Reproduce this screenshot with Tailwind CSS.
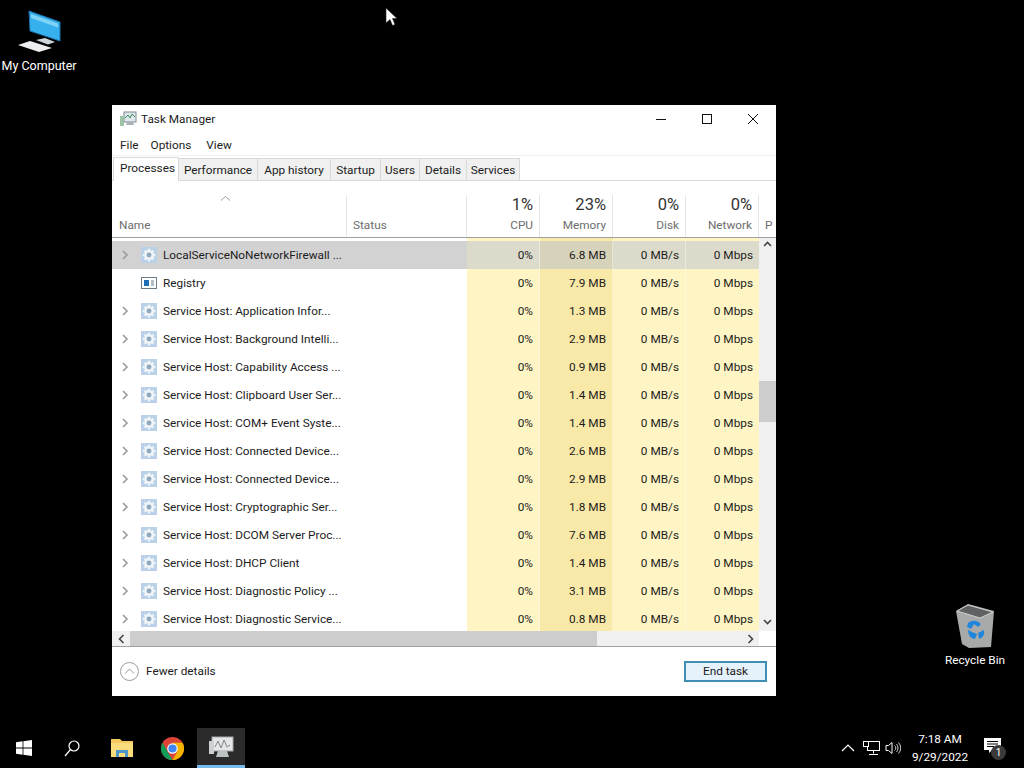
<!DOCTYPE html>
<html lang="en">
<head>
<meta charset="UTF-8">
<title>Task Manager</title>
<script src="https://cdn.jsdelivr.net/npm/@tailwindcss/browser@4"></script>
</head>
<body class="relative w-[1024px] h-[768px] overflow-hidden bg-black font-['Roboto',sans-serif] text-[11.8px] text-[#1c1c1c]">

<svg class="hidden">
  <symbol id="gear" viewBox="0 0 18 18">
    <rect width="18" height="18" fill="#b9d2e8"/>
    <path d="M7.6 0h2.800l.5 2.400 1.500.6 2-1.300 2 2-1.300 2 .6 1.500 2.400.5v2.800l-2.400.5-.6 1.500 1.300 2-2 2-2-1.300-1.500.6-.5 2.400H7.600l-.5-2.400-1.500-.6-2 1.300-2-2 1.300-2-.6-1.500L0 10.400V7.600l2.400-.5.6-1.500-1.300-2 2-2 2 1.300 1.500-.6z" fill="#f2f5f8" transform="translate(2 2) scale(.78)"/>
    <circle cx="9" cy="9" r="2.800" fill="#8fa9bf"/>
  </symbol>
  <symbol id="chev" viewBox="0 0 8 12"><path d="M2 2l4 4-4 4" fill="none" stroke="#9a9a9a" stroke-width="1.600"/></symbol>
</svg>

<!-- desktop icons -->
<div class="absolute left-0 top-0 w-[78px] flex flex-col items-center text-white text-[12.5px]">
  <svg width="78" height="57" viewBox="0 0 78 57">
    <path d="M29 11l31 11v19l-30-10z" fill="#37b1ee" stroke="#1c6fa8"/>
    <path d="M31 14l27 9.500v4L31 18z" fill="#7fd3f7"/>
    <path d="M36 40l9-2 10 4-7 2.500z" fill="#cfd6da"/>
    <path d="M18 45l12-4 22 7-13 4z" fill="#eceeef"/>
  </svg>
  <span class="whitespace-nowrap leading-[16px] mt-px">My Computer</span>
</div>

<div class="absolute left-[936px] top-[603px] w-[78px] flex flex-col items-center text-white">
  <svg width="40" height="46" viewBox="0 0 40 46">
    <path d="M1 8L13 1l26 7-3 36-22 1-7-4z" fill="#a8aaaa"/>
    <path d="M2 8l11-6 25 7-13 6z" fill="#5f6162" stroke="#d0d0d0"/>
    <path d="M13 20a9 9 0 0 1 13 1l-3 3-4-3-3 5-4-2zM13 27l4 2 5 2-2 5c-4 0-7-4-7-9zM24 36l-1-6 6-3c1 4-1 8-5 9z" fill="#1f86dc"/>
  </svg>
  <span class="mt-[3px] leading-[16px] whitespace-nowrap">Recycle Bin</span>
</div>

<!-- cursor -->
<svg class="absolute left-[385px] top-[7px]" width="13" height="20" viewBox="0 0 13 20">
  <path d="M1 1v15l4-3.500 2.500 6 2.500-1-2.500-6H12z" fill="#fff" stroke="#222" stroke-width=".6"/>
</svg>

<!-- task manager window -->
<div class="absolute left-[112px] top-[105px] w-[664px] h-[591px] bg-white flex flex-col">
  <div class="h-[28px] flex items-center shrink-0">
    <svg class="ml-[8px]" width="17" height="16" viewBox="0 0 17 16">
      <rect x="4" y="1" width="12" height="10" fill="#dfe7ec" stroke="#7e8a92"/>
      <path d="M5 7l3-3 2 3 2-4 3 3" fill="none" stroke="#3f8f5d"/>
      <rect x="0" y="5" width="4" height="10" fill="#9cc3a6"/>
      <path d="M7 11h6l1 3H6z" fill="#a9b2b8"/>
    </svg>
    <span class="ml-[4px] mt-[2px]">Task Manager</span>
    <div class="ml-auto flex items-center">
      <svg class="w-[46px] h-[28px]" viewBox="0 0 46 28"><path d="M18 14.500h10" stroke="#111" fill="none"/></svg>
      <svg class="w-[46px] h-[28px]" viewBox="0 0 46 28"><rect x="18.500" y="9.500" width="9" height="9" stroke="#111" fill="none"/></svg>
      <svg class="w-[46px] h-[28px]" viewBox="0 0 46 28"><path d="M18 9l10 10M28 9L18 19" stroke="#111" fill="none"/></svg>
    </div>
  </div>

  <div class="h-[23px] flex items-center pl-[8px] pt-[3px] shrink-0 border-b border-[#f0f0f0]">
    <span>File</span><span class="ml-[12px]">Options</span><span class="ml-[15px]">View</span>
  </div>

  <div class="h-[25px] flex items-end pl-[1px] shrink-0 border-b border-[#d9d9d9] relative">
    <div class="w-[66px] h-[24px] -mb-px bg-white border border-b-0 border-[#d9d9d9] pl-[6px] leading-[20px]">Processes</div>
    <div class="w-[79px] h-[22px] bg-[#f0f0f0] border-r border-t border-[#d9d9d9] text-center leading-[22px]">Performance</div>
    <div class="w-[73px] h-[22px] bg-[#f0f0f0] border-r border-t border-[#d9d9d9] text-center leading-[22px]">App history</div>
    <div class="w-[50px] h-[22px] bg-[#f0f0f0] border-r border-t border-[#d9d9d9] text-center leading-[22px]">Startup</div>
    <div class="w-[39px] h-[22px] bg-[#f0f0f0] border-r border-t border-[#d9d9d9] text-center leading-[22px]">Users</div>
    <div class="w-[47px] h-[22px] bg-[#f0f0f0] border-r border-t border-[#d9d9d9] text-center leading-[22px]">Details</div>
    <div class="w-[53px] h-[22px] bg-[#f0f0f0] border-r border-t border-[#d9d9d9] text-center leading-[22px]">Services</div>
  </div>

  <!-- column headers -->
  <div class="h-[57px] flex shrink-0 border-b border-[#a0a0a0] text-[#6d6d6d] pt-[14px] overflow-hidden">
    <div class="w-[235px] border-r border-[#e5e5e5] pl-[7px] flex flex-col relative">
      <svg class="absolute left-[108px] top-0" width="11" height="7" viewBox="0 0 11 7"><path d="M1 5.500l4.500-4 4.500 4" fill="none" stroke="#a0a0a0"/></svg>
      <span class="mt-auto mb-[4px] leading-[16px]">Name</span>
    </div>
    <div class="w-[120px] border-r border-[#e5e5e5] pl-[6px] flex flex-col">
      <span class="mt-auto mb-[4px] leading-[16px]">Status</span>
    </div>
    <div class="w-[73px] border-r border-[#e5e5e5] pr-[6px] flex flex-col items-end">
      <span class="text-[16.5px] leading-[20px] text-[#333]">1%</span><span class="mt-auto mb-[4px] leading-[16px]">CPU</span>
    </div>
    <div class="w-[73px] border-r border-[#e5e5e5] pr-[6px] flex flex-col items-end">
      <span class="text-[16.5px] leading-[20px] text-[#333]">23%</span><span class="mt-auto mb-[4px] leading-[16px]">Memory</span>
    </div>
    <div class="w-[73px] border-r border-[#e5e5e5] pr-[6px] flex flex-col items-end">
      <span class="text-[16.5px] leading-[20px] text-[#333]">0%</span><span class="mt-auto mb-[4px] leading-[16px]">Disk</span>
    </div>
    <div class="w-[73px] border-r border-[#e5e5e5] pr-[6px] flex flex-col items-end">
      <span class="text-[16.5px] leading-[20px] text-[#333]">0%</span><span class="mt-auto mb-[4px] leading-[16px]">Network</span>
    </div>
    <div class="pl-[6px] flex flex-col"><span class="mt-auto mb-[4px] leading-[16px]">P</span></div>
  </div>

  <!-- rows -->
  <div class="h-[393px] flex shrink-0 overflow-hidden">
    <div class="w-[647px] h-full overflow-hidden">
      <div class="h-[3px] flex">
        <div class="w-[355px]"></div>
        <div class="w-[73px] bg-[#fef4c4]"></div><div class="w-[73px] bg-[#f9e9a8]"></div><div class="w-[73px] bg-[#fef4c4]"></div><div class="w-[73px] bg-[#fef4c4]"></div>
      </div>
      <div id="rows"></div>
    </div>
    <div class="w-[17px] bg-[#f0f0f0] flex flex-col items-center relative">
      <svg class="mt-[3px]" width="9" height="7" viewBox="0 0 9 7"><path d="M1 5l3.500-3.500L8 5" fill="none" stroke="#444" stroke-width="1.600"/></svg>
      <div class="absolute left-0 top-[143px] w-[17px] h-[41px] bg-[#cdcdcd]"></div>
      <svg class="mt-auto mb-[6px]" width="9" height="7" viewBox="0 0 9 7"><path d="M1 2l3.500 3.500L8 2" fill="none" stroke="#444" stroke-width="1.600"/></svg>
    </div>
  </div>

  <!-- horizontal scrollbar -->
  <div class="h-[16px] flex items-center shrink-0 border-b border-[#a0a0a0]">
    <div class="w-[18px] h-full bg-[#f0f0f0] flex items-center justify-center">
      <svg width="7" height="10" viewBox="0 0 7 10"><path d="M5.500 1L1.500 5l4 4" fill="none" stroke="#444" stroke-width="1.600"/></svg>
    </div>
    <div class="w-[467px] h-full bg-[#cdcdcd]"></div>
    <div class="w-[162px] h-full bg-[#f0f0f0] flex items-center justify-end pr-[5px]">
      <svg width="7" height="10" viewBox="0 0 7 10"><path d="M1.500 1l4 4-4 4" fill="none" stroke="#444" stroke-width="1.600"/></svg>
    </div>
    <div class="w-[17px] h-full bg-white"></div>
  </div>

  <!-- footer -->
  <div class="flex-1 flex items-center pl-[8px] pr-[9px]">
    <svg width="19" height="19" viewBox="0 0 19 19"><circle cx="9.500" cy="9.500" r="9" fill="none" stroke="#9a9a9a"/><path d="M5 11.500l4.500-4.500 4.500 4.500" fill="none" stroke="#9a9a9a"/></svg>
    <span class="ml-[7px] mt-[1px]">Fewer details</span>
    <div class="ml-auto w-[83px] h-[21px] border-2 border-[#3f8fb5] bg-[#e5f1fb] flex items-center justify-center">End task</div>
  </div>
</div>

<!-- taskbar -->
<div class="absolute left-0 bottom-0 w-full h-[40px] bg-black flex items-center text-white">
  <div class="w-[48px] h-full flex items-center justify-center">
    <svg width="16" height="16" viewBox="0 0 16 16" fill="#fff"><path d="M0 2.200l6.600-.9v6.300H0zM7.400 1.200L16 0v7.600H7.400zM0 8.400h6.600v6.300L0 13.800zM7.400 8.400H16V16l-8.600-1.200z"/></svg>
  </div>
  <div class="w-[48px] h-full flex items-center justify-center">
    <svg width="16" height="17" viewBox="0 0 16 17" fill="none" stroke="#fff" stroke-width="1.200"><circle cx="10" cy="6" r="5"/><path d="M6.500 9.500L1 16"/></svg>
  </div>
  <div class="w-[50px] h-full ml-[1px] flex items-center justify-center">
    <svg width="22" height="18" viewBox="0 0 22 18"><path d="M0 0h9l2 2h11v16H0z" fill="#f5c95c"/><path d="M0 4h22v14H0z" fill="#fbdc7d"/><path d="M5 18v-7h12v7h-3v-4H8v4z" fill="#4f95c9"/></svg>
  </div>
  <div class="w-[50px] h-full flex items-center justify-center">
    <svg width="23" height="23" viewBox="0 0 24 24">
      <circle cx="12" cy="12" r="12" fill="#db4437"/>
      <path d="M12 24A12 12 0 0 1 1.600 6l5.200 9z" fill="#0f9d58"/>
      <path d="M12 24l5.200-9L12 6h10.400A12 12 0 0 1 12 24z" fill="#f4b400"/>
      <circle cx="12" cy="12" r="5.500" fill="#fff"/><circle cx="12" cy="12" r="4.300" fill="#4285f4"/>
    </svg>
  </div>
  <div class="w-[48px] h-full bg-[#2b2b2b] border-b-[3px] border-[#76b9ed] flex items-center justify-center">
    <svg width="26" height="24" viewBox="0 0 26 24">
      <rect x="4" y="2" width="21" height="14" fill="#e4e6e7" stroke="#a3a8ab"/>
      <path d="M7 12l3-6 3 7 3-8 3 7 3-2" fill="none" stroke="#7f878c"/>
      <rect x="1" y="6" width="5" height="13" fill="#cdd0d2"/>
      <path d="M10 16h9l2 6H8z" fill="#bcc1c4"/>
    </svg>
  </div>
  <div class="ml-auto flex items-center h-full pr-[8px]">
    <svg width="14" height="8" viewBox="0 0 14 8"><path d="M1 7l6-6 6 6" fill="none" stroke="#fff" stroke-width="1.200"/></svg>
    <svg class="ml-[8px]" width="17" height="15" viewBox="0 0 17 15" fill="none" stroke="#fff"><rect x="4.500" y=".5" width="12" height="9"/><path d="M10.500 9.500v3M6 13.500h9"/><rect x=".5" y=".5" width="5" height="5" fill="#000"/></svg>
    <svg class="ml-[5px]" width="16" height="14" viewBox="0 0 16 14" fill="none" stroke="#fff"><path d="M1 4.500h2.500L7 1.500v11l-3.500-3H1z"/><path d="M9.500 4.500a3 3 0 0 1 0 5M11.500 3a6 6 0 0 1 0 8M13.500 1.500a8 8 0 0 1 0 11" stroke="#ccc"/></svg>
    <div class="w-[56px] ml-[11px] flex flex-col items-center leading-[18px] whitespace-nowrap">
      <span>7:18 AM</span><span>9/29/2022</span>
    </div>
    <div class="relative w-[48px] flex justify-center">
      <svg class="-mt-[4px]" width="17" height="16" viewBox="0 0 17 16"><path d="M0 0h17v12H8l-3 3v-3H0z" fill="#fff"/><path d="M3 3.500h11M3 6h11M3 8.500h7" stroke="#000"/></svg>
      <span class="absolute left-[23px] top-[3px] w-[15px] h-[15px] rounded-full bg-[#3a3a3a] text-[10px] leading-[15px] text-center">1</span>
    </div>
  </div>
</div>

<script>
  var rows = [
    ['LocalServiceNoNetworkFirewall ...', '6.8 MB'],
    ['Registry', '7.9 MB'],
    ['Service Host: Application Infor...', '1.3 MB'],
    ['Service Host: Background Intelli...', '2.9 MB'],
    ['Service Host: Capability Access ...', '0.9 MB'],
    ['Service Host: Clipboard User Ser...', '1.4 MB'],
    ['Service Host: COM+ Event Syste...', '1.4 MB'],
    ['Service Host: Connected Device...', '2.6 MB'],
    ['Service Host: Connected Device...', '2.9 MB'],
    ['Service Host: Cryptographic Ser...', '1.8 MB'],
    ['Service Host: DCOM Server Proc...', '7.6 MB'],
    ['Service Host: DHCP Client', '1.4 MB'],
    ['Service Host: Diagnostic Policy ...', '3.1 MB'],
    ['Service Host: Diagnostic Service...', '0.8 MB']
  ];
  var html = '';
  rows.forEach(function (r, i) {
    var hot = i === 0;
    var isReg = r[0] === 'Registry';
    var icon = isReg
      ? '<svg class="ml-[12px]" width="16" height="12" viewBox="0 0 16 12"><rect x=".5" y=".5" width="15" height="11" fill="#fff" stroke="#6b7b88"/><rect x="3" y="3" width="5" height="6" fill="#1c6fb5"/><path d="M10 4h3M10 6h3M10 8h3" stroke="#6b7b88"/></svg>'
      : '<svg class="ml-[12px]" width="16" height="16"><use href="#gear"/></svg>';
    var chev = isReg ? '<span class="w-[8px] ml-[9px]"></span>' : '<svg class="ml-[9px]" width="8" height="12"><use href="#chev"/></svg>';
    html += '<div class="h-[28px] flex items-center">'
      + '<div class="w-[355px] h-full flex items-center ' + (hot ? 'bg-[#d2d2d2]' : '') + '">' + chev + icon
      + '<span class="ml-[6px] pt-[2px] whitespace-nowrap">' + r[0] + '</span></div>'
      + '<div class="w-[73px] h-full border-r border-white/40 pr-[6px] pt-[2px] flex items-center justify-end ' + (hot ? 'bg-[#dcdbcb]' : 'bg-[#fef4c4]') + '">0%</div>'
      + '<div class="w-[73px] h-full border-r border-white/40 pr-[6px] pt-[2px] flex items-center justify-end ' + (hot ? 'bg-[#d6d3ba]' : 'bg-[#f9e9a8]') + '">' + r[1] + '</div>'
      + '<div class="w-[73px] h-full border-r border-white/40 pr-[6px] pt-[2px] flex items-center justify-end ' + (hot ? 'bg-[#dcdbcb]' : 'bg-[#fef4c4]') + '">0 MB/s</div>'
      + '<div class="w-[73px] h-full pr-[6px] pt-[2px] flex items-center justify-end ' + (hot ? 'bg-[#dcdbcb]' : 'bg-[#fef4c4]') + '">0 Mbps</div>'
      + '</div>';
  });
  document.getElementById('rows').innerHTML = html;
</script>
</body>
</html>
